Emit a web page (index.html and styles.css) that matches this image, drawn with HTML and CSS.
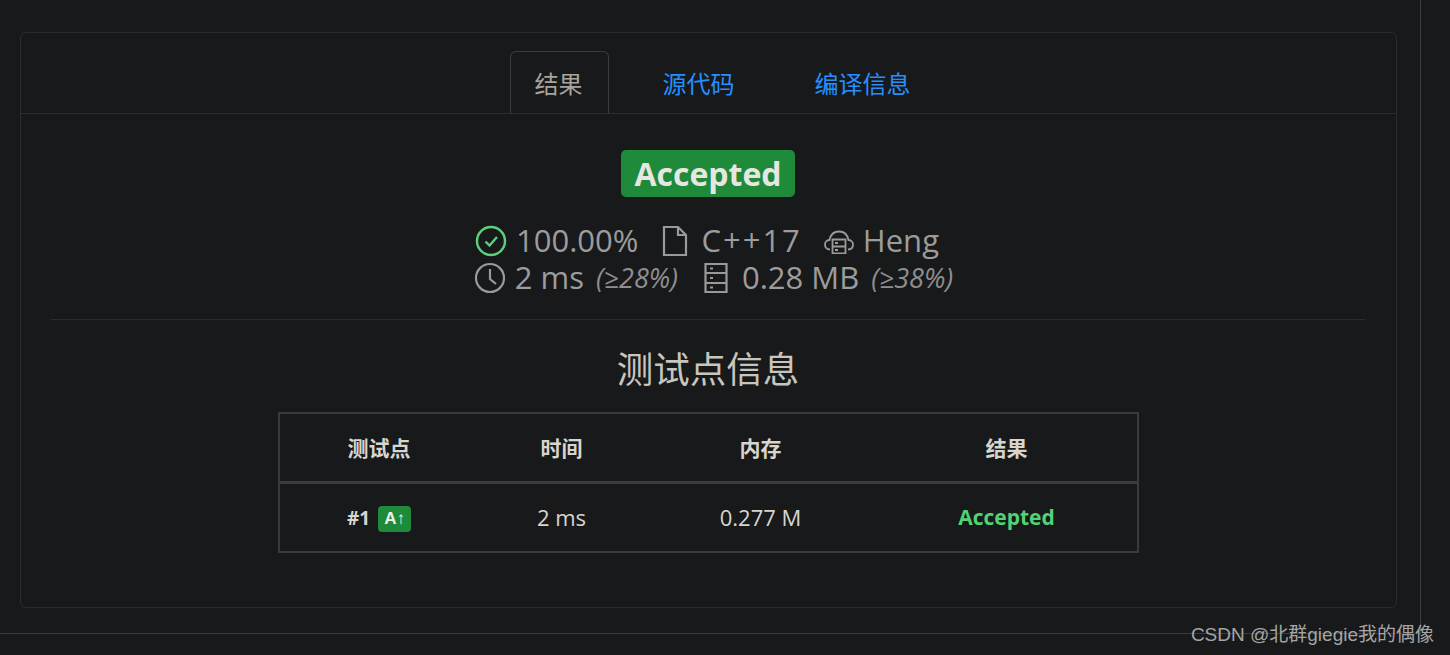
FILE: index.html

```html
<!DOCTYPE html>
<html lang="zh-CN">
<head>
<meta charset="utf-8">
<title>Result</title>
<link rel="stylesheet" href="styles.css">
</head>
<body>
<div class="frame">
  <div class="card">
    <ul class="tabs">
      <li class="tab active">结果</li>
      <li class="tab">源代码</li>
      <li class="tab">编译信息</li>
    </ul>
    <div class="panel">
      <div class="verdict"><span class="verdict-label">Accepted</span></div>
      <div class="stats">
        <div class="stat-row first">
          <svg class="ico ok" viewBox="0 0 32 32"><circle cx="16" cy="16" r="14"/><path d="M10.5 16.5l4 4 7.5-8.5"/></svg>
          <span class="stat-text">100.00%</span>
          <svg class="ico file" viewBox="0 0 26 32"><path d="M2 2h14l8 8v20H2z"/><path d="M16 2v8h8"/></svg>
          <span class="stat-text lang">C++17</span>
          <svg class="ico cloud" viewBox="0 0 30 24"><path d="M6 19.500C2.500 19.500 1 17 1 14.500 1 11.500 3.500 10 5.500 10 6.500 5 10 1.500 15 1.500S23.500 5 24.500 10C26.500 10 29 11.500 29 14.500 29 17 27.500 19.500 24 19.500"/><path d="M8.500 9.500h13v14h-13zM8.500 16.500h13"/><path d="M11 13h3M11 20h3"/></svg>
          <span class="stat-text">Heng</span>
        </div>
        <div class="stat-row second">
          <svg class="ico clock" viewBox="0 0 32 32"><circle cx="16" cy="16" r="14"/><path d="M16 7v10l6 5"/></svg>
          <span class="stat-text">2 ms</span>
          <em class="pct">(≥28%)</em>
          <svg class="ico server" viewBox="0 0 24 32"><path d="M1.500 2h21v28h-21zM1.500 11h21M1.500 21h21"/><path d="M6 6.500h3M6 16h3M6 25.500h3"/></svg>
          <span class="stat-text">0.28 MB</span>
          <em class="pct">(≥38%)</em>
        </div>
      </div>
      <hr class="divider">
      <h2 class="cases-title">测试点信息</h2>
      <table class="cases">
        <thead>
          <tr><th class="c1">测试点</th><th class="c2">时间</th><th class="c3">内存</th><th class="c4">结果</th></tr>
        </thead>
        <tbody>
          <tr>
            <td class="case-id">#1 <span class="mini-tag">A↑</span></td>
            <td>2 ms</td>
            <td>0.277 M</td>
            <td class="accepted">Accepted</td>
          </tr>
        </tbody>
      </table>
    </div>
  </div>
</div>
<div class="watermark">CSDN @北群giegie我的偶像</div>
</body>
</html>
```

FILE: styles.css

```css
html, body {
  margin: 0;
  height: 655px;
  overflow: hidden;
  background: #18191b;
}
body {
  position: relative;
  font-family: "Open Sans", "Noto Sans CJK SC", sans-serif;
  color: #d0ccc5;
}

/* outer page lines */
.frame {
  box-sizing: border-box;
  width: 1421px;
  height: 634px;
  padding: 32px 23px 0 20px;
  border-right: 1px solid #3a3c3e;
  border-bottom: 1px solid #3a3c3e;
}
.card {
  box-sizing: border-box;
  height: 576px;
  border: 1px solid #2a2c2e;
  border-radius: 6px;
}

/* ----------- tabs ----------- */
.tabs {
  display: flex;
  justify-content: center;
  gap: 30px;
  list-style: none;
  margin: 0;
  padding: 18px 0 0 28px;
  height: 81px;
  box-sizing: border-box;
  border-bottom: 1px solid #2a2c2e;
}
.tab {
  box-sizing: border-box;
  height: 63px;
  padding: 12px 24px 0;
  border: 1px solid transparent;
  border-bottom: 0;
  border-radius: 6px 6px 0 0;
  font-size: 24px;
  line-height: 40px;
  color: #2490ff;
}
.tab.active {
  padding-right: 25px;
  margin-right: -1px;
  border-color: #3a3c3e;
  color: #a8a49c;
}

/* ----------- verdict ----------- */
.panel {
  padding: 0 31px 0 30px;
  text-align: center;
}
.verdict {
  padding-top: 36px;
  height: 47px;
}
.verdict-label {
  display: inline-block;
  height: 47px;
  padding: 0 13px;
  border-radius: 5px;
  background: #1e8a3a;
  color: #e8e6e1;
  font-size: 32px;
  font-weight: 700;
  line-height: 47px;
}
.stats {
  margin-top: 25px;
  color: #9c9c9c;
  font-size: 31px;
}
.stat-row {
  display: flex;
  justify-content: center;
  align-items: center;
  height: 37px;
}
.stat-row.first { padding-right: 2px; }
.stat-row.second { padding-left: 11px; }
.ico {
  flex: none;
  fill: none;
  stroke: #9a9a9a;
  stroke-width: 2.2;
}
.ico.ok { width: 32px; height: 32px; stroke: #5ad17a; stroke-width: 2.4; margin-right: 9px; }
.ico.file { width: 26px; height: 32px; margin: 0 13px 0 24px; }
.ico.cloud { width: 30px; height: 24px; margin: 2px 9px 0 22px; stroke-width: 1.8; }
.ico.clock { width: 32px; height: 32px; margin-right: 9px; }
.ico.server { width: 24px; height: 32px; margin: 0 14px 0 26px; }
.stat-text { line-height: 37px; }
.lang { letter-spacing: 2px; }
.pct {
  margin-left: 12px;
  font-size: 27px;
  color: #8e8e8e;
}

.divider {
  height: 1px;
  border: 0;
  margin: 23px 0 0;
  background: #2a2c2e;
}
.cases-title {
  margin: 24px 0 0;
  font-size: 36.5px;
  font-weight: 400;
  line-height: 50px;
  color: #c8c5be;
}

/* ----------- cases table ----------- */
.cases {
  width: 861px;
  margin: 18px auto 0;
  border-collapse: collapse;
  font-size: 22px;
  color: #d8d5ce;
  border: 2px solid #383c3d;
}
.cases th, .cases td {
  height: 65px;
  padding: 0 0 2px;
  text-align: center;
}
.cases th { font-size: 21px; font-weight: 700; border-bottom: 3px solid #383c3d; }
.c1 { width: 199px; }
.c2 { width: 166px; }
.c3 { width: 232px; }
.cases .case-id { font-size: 19px; font-weight: 700; padding: 2px 0 0; }
.mini-tag {
  display: inline-block;
  margin-left: 3px;
  padding: 0 6px;
  border-radius: 4px;
  background: #1e8a3a;
  color: #f0eee9;
  font-family: "Liberation Sans", sans-serif;
  font-size: 17px;
  line-height: 26px;
  vertical-align: middle;
}
.accepted { color: #52d273; font-weight: 700; font-size: 21px; }

.watermark {
  position: absolute;
  right: 16px;
  top: 623px;
  font-family: "Liberation Sans", "Noto Sans CJK SC", sans-serif;
  font-size: 19px;
  line-height: 24px;
  color: #a5a5a5;
}
```
